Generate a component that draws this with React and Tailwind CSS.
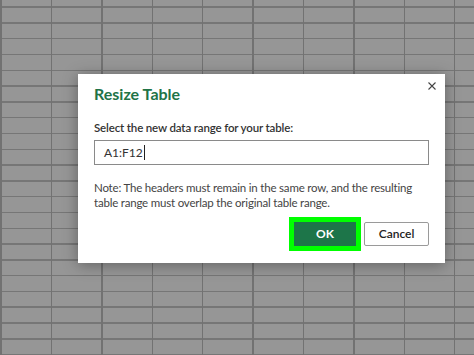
import React from 'react';

export default function App() {
    return (
        <div
            className="relative w-[474px] h-[355px] overflow-hidden bg-[#969696] bg-[repeating-linear-gradient(90deg,transparent_0_0.3px,#727272_0.3px_1.8px,transparent_1.8px_50.4px),repeating-linear-gradient(180deg,transparent_0_6.3px,#767676_6.3px_7.8px,transparent_7.8px_15.8px)]"
            style={{ fontFamily: 'Lato, "Open Sans", sans-serif' }}
        >
            <div className="absolute left-[78px] top-[74px] w-[367px] h-[189px] bg-white shadow-[0_2px_14px_rgba(0,0,0,0.35)] px-4 pt-[9px]">
                <button className="absolute right-[6px] top-[5px] w-[14px] h-[14px] flex items-center justify-center text-[#444]">
                    <svg width="8" height="8" viewBox="0 0 8 8" fill="none" stroke="currentColor" strokeWidth="1.1">
                        <path d="M0.5 0.5 L7.5 7.5 M7.5 0.5 L0.5 7.5" />
                    </svg>
                </button>

                <h2 className="text-[16px] leading-[22px] font-bold text-[#217346]">Resize Table</h2>

                <p className="mt-[15px] text-[11.5px] leading-4 font-semibold tracking-[-0.15px] text-[#333]">
                    Select the new data range for your table:
                </p>

                <div className="mt-[4px] h-[25px] border border-[#8a8a8a] flex items-center pl-[9px] text-[12px] text-[#333]">
                    A1:F12<span className="inline-block w-px h-[15px] bg-[#222] ml-px"></span>
                </div>

                <p className="mt-[15px] text-[11.5px] leading-[15px] tracking-[-0.2px] text-[#444]">
                    Note: The headers must remain in the same row, and the resulting table range must overlap the original table range.
                </p>

                <div className="mt-[12px] flex justify-end gap-2">
                    <button className="w-[62px] h-[24px] bg-[#1d7549] text-white text-[12px] font-bold outline-[5px] outline-solid outline-[#00ff00]">
                        OK
                    </button>
                    <button className="w-[65px] h-[24px] border border-[#9a9a9a] rounded-[2px] bg-white text-[#222] text-[12px] font-semibold">
                        Cancel
                    </button>
                </div>
            </div>
        </div>
    );
}
